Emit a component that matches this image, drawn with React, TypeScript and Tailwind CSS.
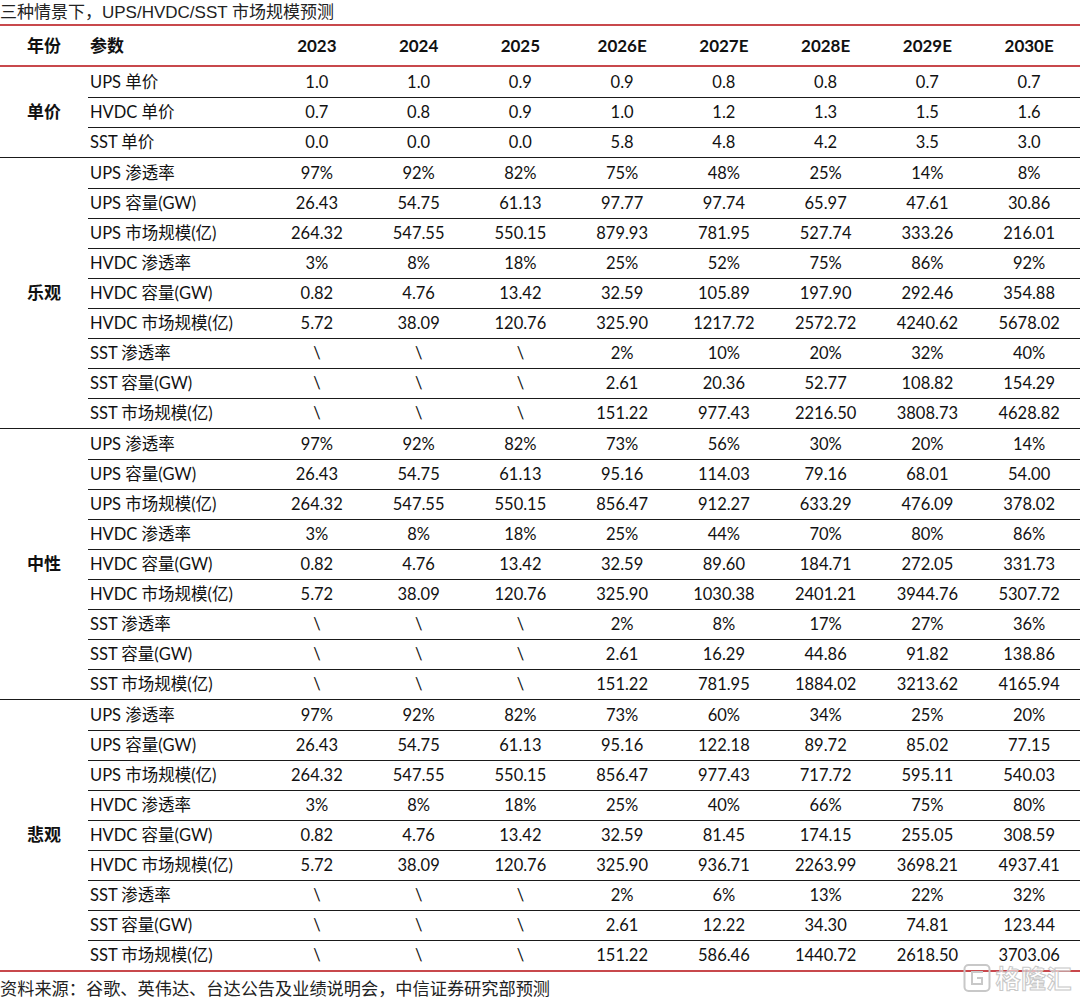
import React from 'react'

const years = ['2023', '2024', '2025', '2026E', '2027E', '2028E', '2029E', '2030E']

type Row = [string, string[]]
type Group = { name: string; rows: Row[] }

const groups: Group[] = [
  {
    name: '单价',
    rows: [
      ['UPS 单价', ['1.0', '1.0', '0.9', '0.9', '0.8', '0.8', '0.7', '0.7']],
      ['HVDC 单价', ['0.7', '0.8', '0.9', '1.0', '1.2', '1.3', '1.5', '1.6']],
      ['SST 单价', ['0.0', '0.0', '0.0', '5.8', '4.8', '4.2', '3.5', '3.0']],
    ],
  },
  {
    name: '乐观',
    rows: [
      ['UPS 渗透率', ['97%', '92%', '82%', '75%', '48%', '25%', '14%', '8%']],
      ['UPS 容量(GW)', ['26.43', '54.75', '61.13', '97.77', '97.74', '65.97', '47.61', '30.86']],
      ['UPS 市场规模(亿)', ['264.32', '547.55', '550.15', '879.93', '781.95', '527.74', '333.26', '216.01']],
      ['HVDC 渗透率', ['3%', '8%', '18%', '25%', '52%', '75%', '86%', '92%']],
      ['HVDC 容量(GW)', ['0.82', '4.76', '13.42', '32.59', '105.89', '197.90', '292.46', '354.88']],
      ['HVDC 市场规模(亿)', ['5.72', '38.09', '120.76', '325.90', '1217.72', '2572.72', '4240.62', '5678.02']],
      ['SST 渗透率', ['\\', '\\', '\\', '2%', '10%', '20%', '32%', '40%']],
      ['SST 容量(GW)', ['\\', '\\', '\\', '2.61', '20.36', '52.77', '108.82', '154.29']],
      ['SST 市场规模(亿)', ['\\', '\\', '\\', '151.22', '977.43', '2216.50', '3808.73', '4628.82']],
    ],
  },
  {
    name: '中性',
    rows: [
      ['UPS 渗透率', ['97%', '92%', '82%', '73%', '56%', '30%', '20%', '14%']],
      ['UPS 容量(GW)', ['26.43', '54.75', '61.13', '95.16', '114.03', '79.16', '68.01', '54.00']],
      ['UPS 市场规模(亿)', ['264.32', '547.55', '550.15', '856.47', '912.27', '633.29', '476.09', '378.02']],
      ['HVDC 渗透率', ['3%', '8%', '18%', '25%', '44%', '70%', '80%', '86%']],
      ['HVDC 容量(GW)', ['0.82', '4.76', '13.42', '32.59', '89.60', '184.71', '272.05', '331.73']],
      ['HVDC 市场规模(亿)', ['5.72', '38.09', '120.76', '325.90', '1030.38', '2401.21', '3944.76', '5307.72']],
      ['SST 渗透率', ['\\', '\\', '\\', '2%', '8%', '17%', '27%', '36%']],
      ['SST 容量(GW)', ['\\', '\\', '\\', '2.61', '16.29', '44.86', '91.82', '138.86']],
      ['SST 市场规模(亿)', ['\\', '\\', '\\', '151.22', '781.95', '1884.02', '3213.62', '4165.94']],
    ],
  },
  {
    name: '悲观',
    rows: [
      ['UPS 渗透率', ['97%', '92%', '82%', '73%', '60%', '34%', '25%', '20%']],
      ['UPS 容量(GW)', ['26.43', '54.75', '61.13', '95.16', '122.18', '89.72', '85.02', '77.15']],
      ['UPS 市场规模(亿)', ['264.32', '547.55', '550.15', '856.47', '977.43', '717.72', '595.11', '540.03']],
      ['HVDC 渗透率', ['3%', '8%', '18%', '25%', '40%', '66%', '75%', '80%']],
      ['HVDC 容量(GW)', ['0.82', '4.76', '13.42', '32.59', '81.45', '174.15', '255.05', '308.59']],
      ['HVDC 市场规模(亿)', ['5.72', '38.09', '120.76', '325.90', '936.71', '2263.99', '3698.21', '4937.41']],
      ['SST 渗透率', ['\\', '\\', '\\', '2%', '6%', '13%', '22%', '32%']],
      ['SST 容量(GW)', ['\\', '\\', '\\', '2.61', '12.22', '34.30', '74.81', '123.44']],
      ['SST 市场规模(亿)', ['\\', '\\', '\\', '151.22', '586.46', '1440.72', '2618.50', '3703.06']],
    ],
  },
]

function Watermark() {
  return (
    <div className="absolute right-[8px] bottom-[6px] flex items-center gap-[4px] pointer-events-none">
      <svg width="28" height="30" viewBox="0 0 28 30" fill="none" stroke="#c8c8c8" strokeWidth="2">
        <rect x="1.5" y="2" width="25" height="26" rx="4" />
        <path d="M20 9 H9 V21 H19 V15 H14" />
      </svg>
      <span
        className="text-[25px] leading-none font-bold tracking-[0.5px]"
        style={{ WebkitTextStroke: '1px #c8c8c8', color: 'rgba(255,255,255,0.6)' }}
      >
        格隆汇
      </span>
    </div>
  )
}

export default function App() {
  return (
    <div
      className="relative w-[1080px] h-[999px] bg-white text-[#111] overflow-hidden"
      style={{ fontFamily: 'Lato, "Noto Sans CJK SC", sans-serif' }}
    >
      {/* Title */}
      <div
        className="h-[24px] flex items-center text-[17px] text-[#222] leading-none"
        style={{ fontFamily: '"Liberation Sans", "Noto Sans CJK SC", sans-serif' }}
      >
        三种情景下，UPS/HVDC/SST 市场规模预测
      </div>

      {/* Header */}
      <div className="border-t-2 border-b-2 border-[#c8484c] h-[43px] flex items-center font-bold text-[17px]">
        <div className="w-[88px] text-center">年份</div>
        <div className="w-[178px] pl-[2px]">参数</div>
        {years.map((y) => (
          <div key={y} className="w-[101.75px] text-center">
            {y}
          </div>
        ))}
      </div>

      {/* Body */}
      {groups.map((g, gi) => (
        <div key={g.name} className={`flex ${gi > 0 ? 'border-t border-[#1a1a1a]' : ''}`}>
          <div className="w-[88px] flex items-center justify-center font-bold text-[17px]">{g.name}</div>
          <div className="flex-1">
            {g.rows.map(([label, vals], ri) => (
              <div
                key={label}
                className={`h-[30px] flex items-center text-[16.5px] ${ri > 0 ? 'border-t border-[#1a1a1a]' : ''}`}
              >
                <div className="w-[178px] pl-[2px] whitespace-nowrap">{label}</div>
                {vals.map((v, vi) => (
                  <div key={vi} className="w-[101.75px] text-center">
                    {v}
                  </div>
                ))}
              </div>
            ))}
          </div>
        </div>
      ))}

      {/* Footer */}
      <div
        className="border-t-2 border-[#c8484c] pt-[7px] text-[17.2px] text-[#222] leading-none"
        style={{ fontFamily: '"Noto Sans CJK SC", sans-serif' }}
      >
        资料来源：谷歌、英伟达、台达公告及业绩说明会，中信证券研究部预测
      </div>

      <Watermark />
    </div>
  )
}
